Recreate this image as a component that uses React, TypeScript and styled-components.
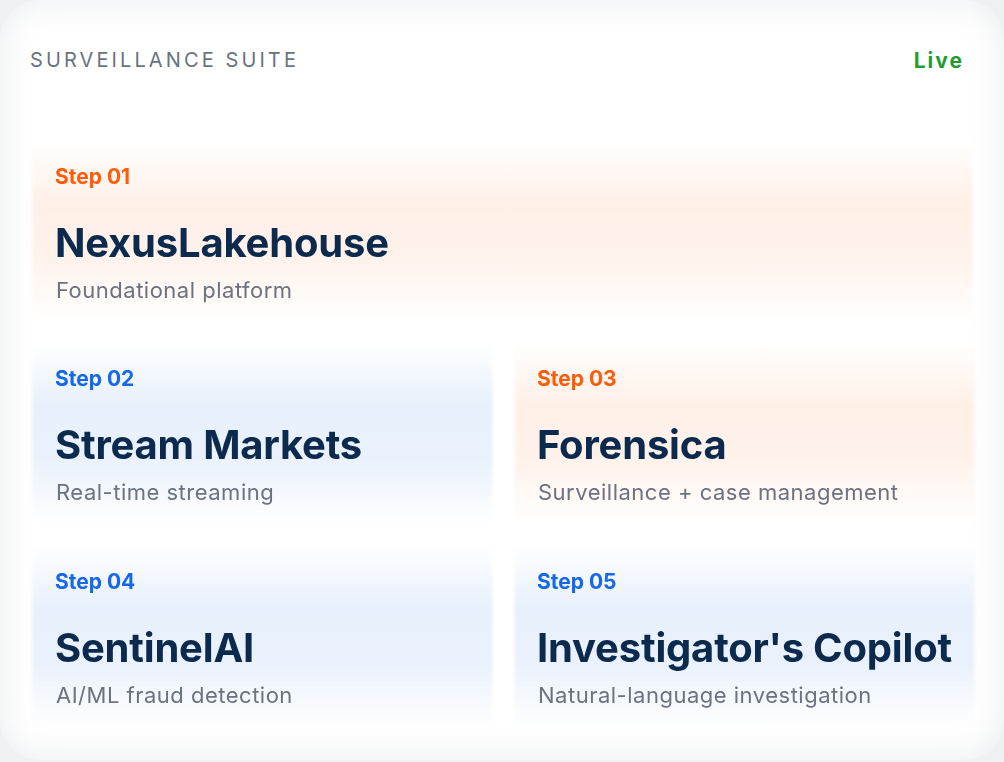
import React from "react";
import styled, { createGlobalStyle } from "styled-components";

const Global = createGlobalStyle`
  html, body { margin: 0; padding: 0; background: #eef0f3; }
  body { font-family: Inter, "Noto Sans", sans-serif; }
`;

const Card = styled.div`
  width: 1004px;
  height: 760px;
  box-sizing: border-box;
  border-radius: 38px;
  background: #ffffff;
  box-shadow: inset 0 0 34px rgba(120, 130, 145, 0.16);
  padding: 48px 27px 0 30px;
`;

const Header = styled.div`
  display: flex;
  justify-content: space-between;
  align-items: center;
  height: 24px;
  padding-right: 13px;
`;

const Eyebrow = styled.div`
  font-size: 20px;
  letter-spacing: 3.1px;
  color: #6b7280;
`;

const Live = styled.div`
  font-size: 21px;
  font-weight: 700;
  letter-spacing: 2px;
  color: #1f9d2f;
`;

const Grid = styled.div`
  margin-top: 68px;
  display: grid;
  grid-template-columns: 465px 465px;
  column-gap: 17px;
  row-gap: 20px;
`;

const Panel = styled.div<{ $tone: "orange" | "blue"; $wide?: boolean }>`
  grid-column: ${(p) => (p.$wide ? "1 / 3" : "auto")};
  margin-right: ${(p) => (p.$wide ? "2px" : "0")};
  box-sizing: border-box;
  padding: 24px 20px 20px 25px;
  height: ${(p) => (p.$wide ? "182px" : "183px")};
  background: linear-gradient(
    to bottom,
    ${(p) => (p.$tone === "orange" ? "rgba(255,236,224,0)" : "rgba(228,238,252,0)")} 0%,
    ${(p) => (p.$tone === "orange" ? "rgba(255,238,228,0.9)" : "rgba(230,239,252,0.95)")} 35%,
    ${(p) => (p.$tone === "orange" ? "rgba(255,240,232,0.85)" : "rgba(232,240,252,0.9)")} 65%,
    ${(p) => (p.$tone === "orange" ? "rgba(255,240,232,0)" : "rgba(232,240,252,0)")} 100%
  );
  -webkit-mask-image: linear-gradient(to right, transparent 0, #000 5px, #000 calc(100% - 5px), transparent 100%);
  mask-image: linear-gradient(to right, transparent 0, #000 5px, #000 calc(100% - 5px), transparent 100%);
`;

const Step = styled.div<{ $tone: "orange" | "blue" }>`
  font-size: 21px;
  line-height: 26px;
  font-weight: 700;
  color: ${(p) => (p.$tone === "orange" ? "#ff5c0a" : "#1668e8")};
`;

const Title = styled.div`
  margin-top: 30px;
  font-size: 40px;
  line-height: 46px;
  font-weight: 700;
  color: #0b2a4d;
  letter-spacing: -0.2px;
  white-space: nowrap;
`;

const Sub = styled.div`
  margin-top: 11px;
  font-size: 22px;
  line-height: 26px;
  letter-spacing: 0.5px;
  color: #6b7280;
  padding-left: 1px;
`;

const items = [
  { step: "Step 01", title: "NexusLakehouse", sub: "Foundational platform", tone: "orange" as const, wide: true },
  { step: "Step 02", title: "Stream Markets", sub: "Real-time streaming", tone: "blue" as const },
  { step: "Step 03", title: "Forensica", sub: "Surveillance + case management", tone: "orange" as const },
  { step: "Step 04", title: "SentinelAI", sub: "AI/ML fraud detection", tone: "blue" as const },
  { step: "Step 05", title: "Investigator's Copilot", sub: "Natural-language investigation", tone: "blue" as const },
];

export default function App() {
  return (
    <>
      <Global />
      <Card>
        <Header>
          <Eyebrow>SURVEILLANCE SUITE</Eyebrow>
          <Live>Live</Live>
        </Header>
        <Grid>
          {items.map((it) => (
            <Panel key={it.step} $tone={it.tone} $wide={it.wide}>
              <Step $tone={it.tone}>{it.step}</Step>
              <Title>{it.title}</Title>
              <Sub>{it.sub}</Sub>
            </Panel>
          ))}
        </Grid>
      </Card>
    </>
  );
}
